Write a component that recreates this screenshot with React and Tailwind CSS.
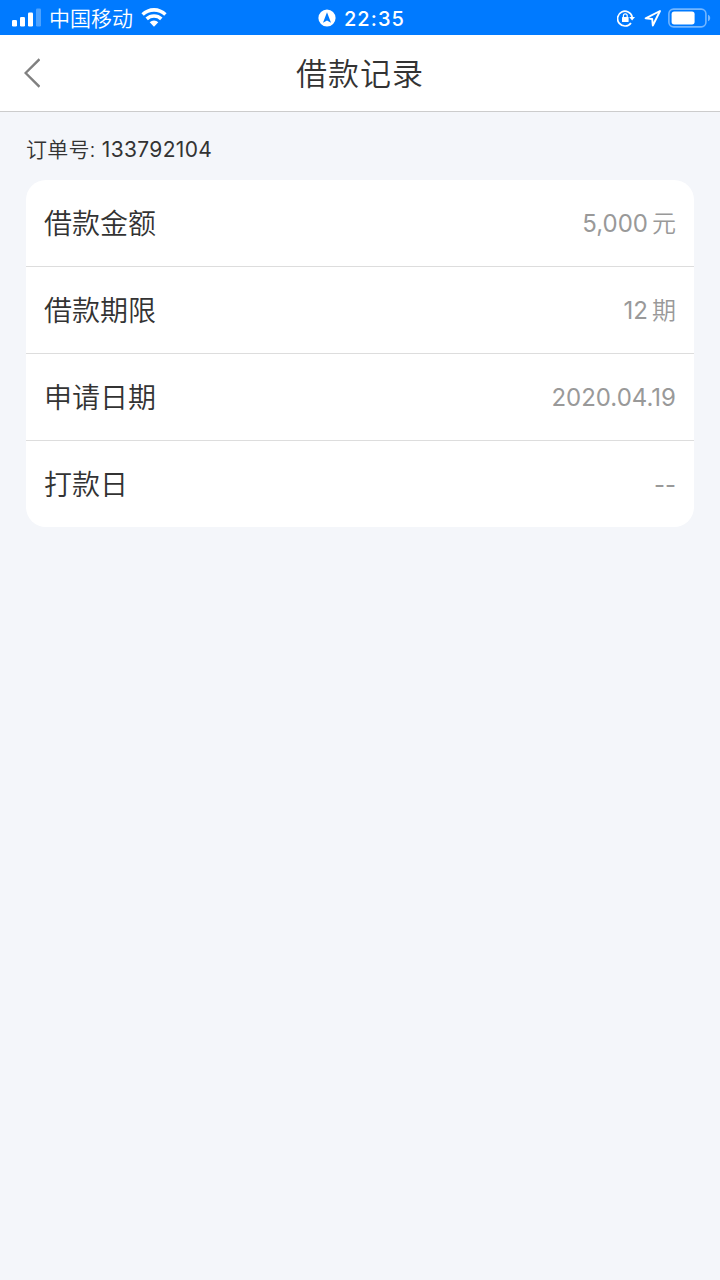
import React from "react";

const records = [
  { label: "借款金额", value: "5,000", unit: "元" },
  { label: "借款期限", value: "12", unit: "期" },
  { label: "申请日期", value: "2020.04.19" },
  { label: "打款日", value: "--" },
];

const StatusBar = () => (
  <div className="grid h-[35px] grid-cols-3 items-center bg-[#007aff] text-white">
    <div className="flex items-center pl-3">
      <svg className="h-5 w-[30px]" viewBox="0 0 30 20" fill="currentColor">
        <rect x="0" y="12" width="5" height="6.5" rx="1.3" />
        <rect x="8" y="9" width="5" height="9.5" rx="1.3" />
        <rect x="16" y="4.5" width="5" height="14" rx="1.3" />
        <rect x="24" y="0.5" width="5" height="18" rx="1.3" opacity="0.3" />
      </svg>
      <span className="ml-[7px] whitespace-nowrap pt-[2px] text-[21px] leading-[33px] font-[350]">中国移动</span>
      <svg className="ml-2 h-5 w-[26px] shrink-0" viewBox="0 0 26 20" fill="currentColor">
        <path d="M0.4 5.2a18 18 0 0 1 25.2 0l-2.4 2.6a14.6 14.6 0 0 0-20.4 0z" />
        <path d="M4.5 9.6a12.2 12.2 0 0 1 17 0l-2.4 2.6a8.8 8.8 0 0 0-12.2 0z" />
        <path d="M8.7 14.2a6.2 6.2 0 0 1 8.6 0L13 18.8z" />
      </svg>
    </div>

    <div className="flex items-center justify-center pl-[3px]">
      <svg className="mt-px h-[18px] w-[18px]" viewBox="0 0 18 18">
        <circle cx="9" cy="9" r="8.6" fill="#fff" />
        <path d="M9 3.2 13 13.8 9 11.4 5 13.8z" fill="#007aff" />
      </svg>
      <span className="ml-2 pt-[3px] text-[20px] leading-[32px] font-medium tracking-[1.1px]">22:35</span>
    </div>

    <div className="flex items-center justify-end pr-[9px]">
      <svg className="h-[18px] w-[19px]" viewBox="0 0 19 18" fill="none" stroke="currentColor" strokeWidth="1.7">
        <path d="M14 13.9A7.4 7.4 0 1 1 15.2 8" />
        <path d="M12.2 8h5.8l-2.9 3.6z" fill="currentColor" stroke="none" />
        <rect x="5" y="8" width="6.6" height="5" rx="0.6" fill="currentColor" stroke="none" />
        <path d="M6.4 8V6.7a1.9 1.9 0 0 1 3.8 0V8" strokeWidth="1.2" />
      </svg>
      <svg
        className="ml-2 h-[18px] w-[18px]"
        viewBox="0 0 18 18"
        fill="none"
        stroke="currentColor"
        strokeWidth="1.9"
        strokeLinejoin="round"
      >
        <path d="M16 2 1.6 9.4l6.6.6.6 6.5z" />
      </svg>
      <svg className="ml-[6px] h-5 w-[43px]" viewBox="0 0 43 20" fill="none">
        <rect x="0.9" y="1.1" width="37" height="17.8" rx="4.6" stroke="#fff" strokeOpacity="0.45" strokeWidth="1.6" />
        <rect x="3.6" y="3.6" width="23" height="12.8" rx="2.6" fill="#fff" />
        <path d="M40 6.8c1.4.5 2.2 1.7 2.2 3.2s-.8 2.7-2.2 3.2z" fill="#fff" fillOpacity="0.45" />
      </svg>
    </div>
  </div>
);

const RecordRow = ({ label, value, unit }) => (
  <div className="flex h-[87px] items-center justify-between border-b border-[#dddddd] px-[18px] pt-[2px] last:h-[86px] last:border-b-0">
    <span className="text-[28px] font-[350] text-[#333333]">{label}</span>
    <span className="flex items-center text-[24px] text-[#999999]">
      <span>{value}</span>
      {unit && <span className="ml-1 font-[350]">{unit}</span>}
    </span>
  </div>
);

export default function App() {
  return (
    <div className="min-h-screen bg-[#f4f6fa] font-[Inter,'Noto_Sans_CJK_SC',sans-serif] text-[#333333]">
      <StatusBar />

      <header className="grid h-[77px] grid-cols-[80px_1fr_80px] items-center border-b border-[#cccccc] bg-white">
        <button className="pl-6" aria-label="返回">
          <svg className="h-[30px] w-4" viewBox="0 0 16 30" fill="none" stroke="#808080" strokeWidth="2.4">
            <path d="M15.5 1.2 1.6 15l13.9 13.8" />
          </svg>
        </button>
        <h1 className="pt-[2px] text-center text-[31px] font-[350] tracking-[1px]">借款记录</h1>
      </header>

      <main className="px-[26px]">
        <div className="flex h-[68px] items-center pt-2 text-[21px] tracking-[0.2px]">
          <span className="mr-[6px] font-[350]">订单号:</span>
          <span className="tracking-[0.35px]">133792104</span>
        </div>
        <section className="rounded-[20px] bg-white">
          {records.map((item) => (
            <RecordRow key={item.label} {...item} />
          ))}
        </section>
      </main>
    </div>
  );
}
